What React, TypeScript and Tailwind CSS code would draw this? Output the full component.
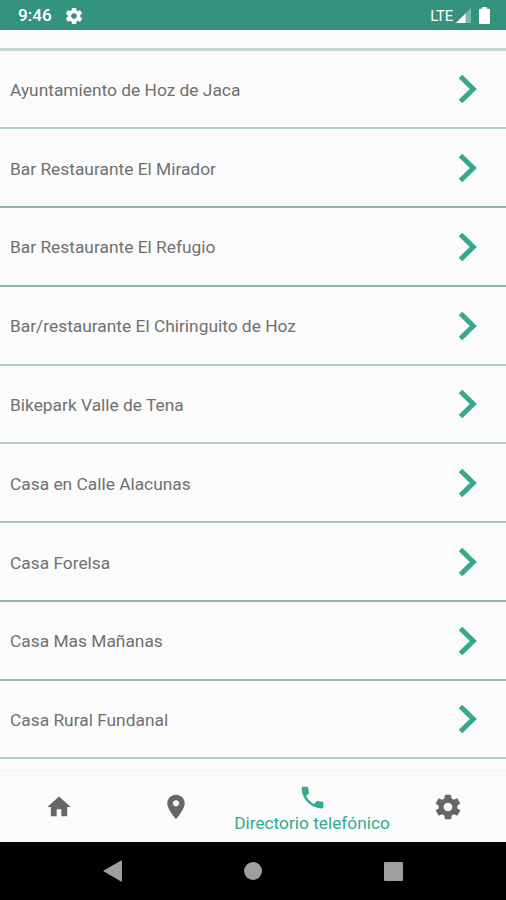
import { IoMdCall, IoMdPin, IoMdSettings } from 'react-icons/io';
import { MdHome } from 'react-icons/md';

const entries = [
  { name: 'Ayuntamiento de Hoz de Jaca', line: 'border-[#b3cdc8]' },
  { name: 'Bar Restaurante El Mirador', line: 'border-[#8ab3b4]' },
  { name: 'Bar Restaurante El Refugio', line: 'border-[#86b5b3]' },
  { name: 'Bar/restaurante El Chiringuito de Hoz', line: 'border-[#b0cdc5]' },
  { name: 'Bikepark Valle de Tena', line: 'border-[#b9cfca]' },
  { name: 'Casa en Calle Alacunas', line: 'border-[#a3c4bd]' },
  { name: 'Casa Forelsa', line: 'border-[#8ab5b5]' },
  { name: 'Casa Mas Mañanas', line: 'border-[#8fbab4]' },
  { name: 'Casa Rural Fundanal', line: 'border-[#b0cdc8]' },
];

const StatusBar = () => (
  <header className="flex h-[30px] shrink-0 items-center bg-[#33937d] pl-[18px] pr-[16px] pt-px text-white">
    <span className="pt-px text-[17.2px] font-medium leading-none">9:46</span>
    <IoMdSettings className="ml-[12px] size-[20px]" />
    <span className="ml-auto pt-px text-[15px] leading-none tracking-[-0.3px]">LTE</span>
    <svg className="ml-[3px] h-[15px] w-[15px]" viewBox="0 0 15 15" fill="currentColor">
      <path d="M0 15 15 0v15z" opacity="0.35" />
      <path d="M0 15 9.5 5.5V15z" />
    </svg>
    <svg className="ml-[8px] h-[17px] w-[11px]" viewBox="0 0 11 17" fill="currentColor">
      <path d="M3.2 0h4.6v1.8h2.1A1.1 1.1 0 0 1 11 2.9v13A1.1 1.1 0 0 1 9.9 17H1.1A1.1 1.1 0 0 1 0 15.9v-13a1.1 1.1 0 0 1 1.1-1.1h2.1z" />
    </svg>
  </header>
);

const EntryRow = ({ name, line }: { name: string; line: string }) => (
  <li className={`flex h-[78.8px] items-center justify-between border-b-2 pl-[10px] pr-[28px] ${line}`}>
    <span className="pt-[3.6px] text-[17.35px] leading-none text-[#707070]">{name}</span>
    <svg className="mt-[0.8px] h-[30px] w-[20px]" viewBox="0 0 20 30" fill="none" stroke="#35a98d" strokeWidth="5">
      <path d="M2.5 2.5 15.3 15 2.5 27.5" />
    </svg>
  </li>
);

const TabBar = () => (
  <nav className="flex h-[72px] shrink-0 items-center border-t border-[#f3f3f3] bg-[#fbfbfb] text-[#666666]">
    <div className="flex w-[117px] justify-center">
      <MdHome className="size-[28px]" />
    </div>
    <div className="flex w-[117px] justify-center">
      <IoMdPin className="size-[28px]" />
    </div>
    <div className="flex w-[156px] flex-col items-center pt-[3px] text-[#33aa8d]">
      <IoMdCall className="size-[29px]" />
      <span className="mt-[3px] whitespace-nowrap text-[17.3px] leading-none">Directorio telefónico</span>
    </div>
    <div className="flex w-[116px] justify-center">
      <IoMdSettings className="size-[30px]" />
    </div>
  </nav>
);

const SystemBar = () => (
  <footer className="flex h-[58px] shrink-0 items-center justify-center gap-[122px] bg-black">
    <svg className="h-[22px] w-[19px]" viewBox="0 0 19 22" fill="#9e9e9e">
      <path d="M0 11 18 .6q1-.5 1 .5v19.8q0 1-1 .5z" />
    </svg>
    <div className="size-[18px] rounded-full bg-[#9e9e9e]" />
    <div className="size-[19px] rounded-[1px] bg-[#9e9e9e]" />
  </footer>
);

const App = () => (
  <div className="flex h-[900px] w-[506px] flex-col overflow-hidden bg-[#fbfbfb] font-['Roboto',sans-serif]">
    <StatusBar />
    <main className="flex-1 overflow-hidden">
      <div className="h-[20.5px] border-b-[3px] border-[#c5d6d2]" />
      <ul className="-mt-[0.2px]">
        {entries.map((entry) => (
          <EntryRow key={entry.name} name={entry.name} line={entry.line} />
        ))}
      </ul>
    </main>
    <TabBar />
    <SystemBar />
  </div>
);

export default App;
